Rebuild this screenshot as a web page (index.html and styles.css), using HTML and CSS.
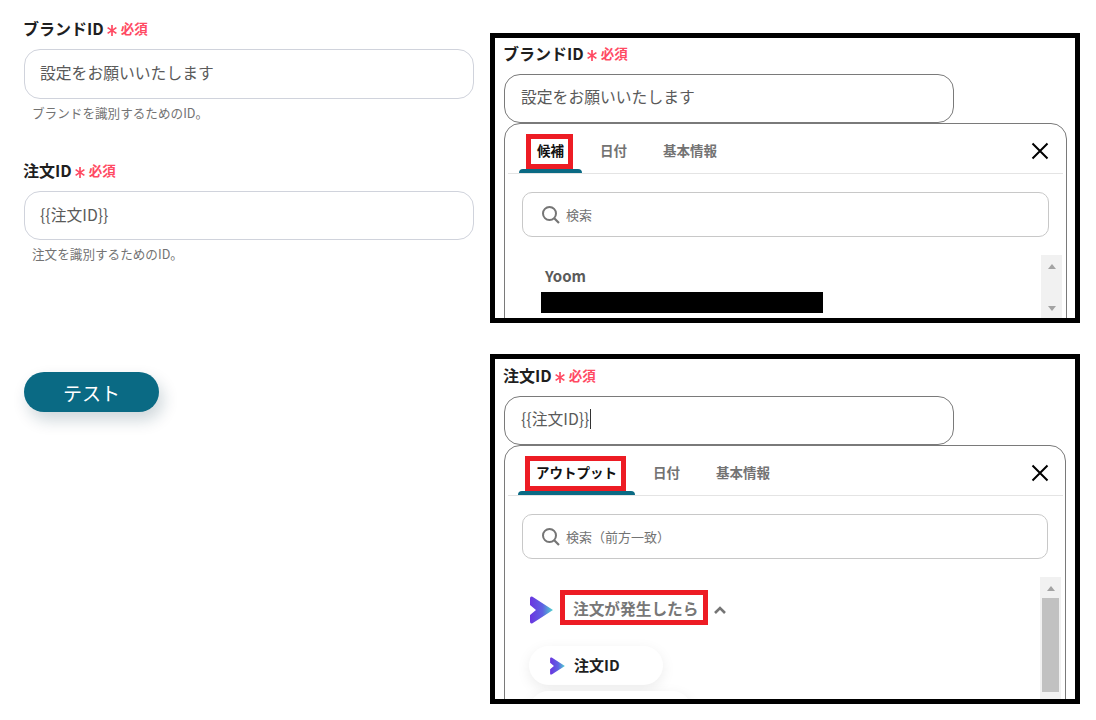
FILE: index.html
```html
<!DOCTYPE html>
<html lang="ja">
<head>
    <meta charset="UTF-8">
    <title>ブランドID / 注文ID</title>
    <link rel="stylesheet" href="styles.css">
</head>
<body>
    <svg class="defs" width="0" height="0" aria-hidden="true">
        <defs>
            <linearGradient id="logoGrad" x1="0" y1="0" x2="1" y2="0">
                <stop offset="0" stop-color="#6a35e0"/>
                <stop offset="0.55" stop-color="#5f62e2"/>
                <stop offset="1" stop-color="#4fd6cf"/>
            </linearGradient>
            <symbol id="star" viewBox="0 0 10 11">
                <path d="M5 0V11M.6 2.6 9.4 8.4M9.4 2.6.6 8.4" stroke="#ff4a63" stroke-width="1.7" fill="none"/>
            </symbol>
        </defs>
    </svg>

    <div class="page">
        <main class="form-col">
            <div class="form-group">
                <div class="label-row">
                    <span class="label-text">ブランドID</span>
                    <svg class="asterisk" width="10" height="11"><use href="#star"/></svg>
                    <span class="required">必須</span>
                </div>
                <div class="text-box">設定をお願いいたします</div>
                <p class="hint">ブランドを識別するためのID。</p>
            </div>

            <div class="form-group">
                <div class="label-row">
                    <span class="label-text">注文ID</span>
                    <svg class="asterisk" width="10" height="11"><use href="#star"/></svg>
                    <span class="required">必須</span>
                </div>
                <div class="text-box text-box-short">{{注文ID}}</div>
                <p class="hint">注文を識別するためのID。</p>
            </div>

            <button type="button" class="test-btn">テスト</button>
        </main>

        <aside class="shots">
            <section class="shot shot-brand">
                <div class="label-row">
                    <span class="label-text">ブランドID</span>
                    <svg class="asterisk" width="10" height="11"><use href="#star"/></svg>
                    <span class="required">必須</span>
                </div>
                <div class="text-box">設定をお願いいたします</div>
                <div class="popup">
                    <div class="tabs">
                        <div class="tab-list">
                            <span class="tab active"><span class="mark"></span>候補</span>
                            <span class="tab">日付</span>
                            <span class="tab">基本情報</span>
                        </div>
                        <svg class="close" width="18" height="18" viewBox="0 0 18 18"><path d="M1.5 1.5 16.5 16.5M16.5 1.5 1.5 16.5" stroke="#000" stroke-width="2" fill="none"/></svg>
                    </div>
                    <div class="search">
                        <svg width="20" height="20" viewBox="0 0 20 20"><circle cx="8.5" cy="8.5" r="6.5" stroke="#757575" stroke-width="2" fill="none"/><path d="M13.2 13.2 18 18" stroke="#757575" stroke-width="2.2" fill="none"/></svg>
                        <span>検索</span>
                    </div>
                    <div class="list">
                        <div class="list-body">
                            <p class="list-title">Yoom</p>
                            <div class="redacted"></div>
                        </div>
                        <div class="scrollbar">
                            <span class="arrow-up"></span>
                            <span class="arrow-down"></span>
                        </div>
                    </div>
                </div>
            </section>

            <section class="shot shot-order">
                <div class="label-row">
                    <span class="label-text">注文ID</span>
                    <svg class="asterisk" width="10" height="11"><use href="#star"/></svg>
                    <span class="required">必須</span>
                </div>
                <div class="text-box">{{注文ID}}<span class="caret"></span></div>
                <div class="popup">
                    <div class="tabs">
                        <div class="tab-list">
                            <span class="tab active"><span class="mark"></span>アウトプット</span>
                            <span class="tab">日付</span>
                            <span class="tab">基本情報</span>
                        </div>
                        <svg class="close" width="18" height="18" viewBox="0 0 18 18"><path d="M1.5 1.5 16.5 16.5M16.5 1.5 1.5 16.5" stroke="#000" stroke-width="2" fill="none"/></svg>
                    </div>
                    <div class="search">
                        <svg width="20" height="20" viewBox="0 0 20 20"><circle cx="8.5" cy="8.5" r="6.5" stroke="#757575" stroke-width="2" fill="none"/><path d="M13.2 13.2 18 18" stroke="#757575" stroke-width="2.2" fill="none"/></svg>
                        <span>検索（前方一致）</span>
                    </div>
                    <div class="list">
                        <div class="list-body">
                            <div class="group-row">
                                <svg class="group-logo" width="25" height="28" viewBox="0 0 25 28"><path d="M1 2.5Q1 0 3.5 .8L24 14 3.5 27.2Q1 28 1 25.5V19L7 14 1 9Z" fill="url(#logoGrad)"/></svg>
                                <span class="group-title">注文が発生したら</span>
                                <svg class="chevron" width="14" height="10" viewBox="0 0 14 10"><path d="M2 8 7 3 12 8" stroke="#757575" stroke-width="2.6" fill="none"/></svg>
                            </div>
                            <div class="pill">
                                <svg width="17" height="18" viewBox="0 0 25 28"><path d="M1 2.5Q1 0 3.5 .8L24 14 3.5 27.2Q1 28 1 25.5V19L7 14 1 9Z" fill="url(#logoGrad)"/></svg>
                                <span class="pill-text">注文ID</span>
                            </div>
                            <div class="pill pill-next"></div>
                        </div>
                        <div class="scrollbar">
                            <span class="arrow-up"></span>
                            <span class="thumb"></span>
                        </div>
                    </div>
                </div>
            </section>
        </aside>
    </div>
</body>
</html>
```

FILE: styles.css
```css
:root {
    --teal: #0a6a84;
    --text-dark: #1f1f1f;
    --text-gray: #5a5a5a;
    --text-muted: #737373;
    --required-red: #ff4a63;
    --mark-red: #ed1c24;
}

* {
    margin: 0;
    padding: 0;
    box-sizing: border-box;
    font-family: "Noto Sans CJK JP", "Noto Sans", sans-serif;
}

body {
    background-color: white;
    overflow: hidden;
}

.defs {
    position: absolute;
}

.page {
    display: grid;
    grid-template-columns: 490px 590px;
    height: 720px;
}

.form-col {
    padding: 17px 16px 0 24px;
}

.form-group {
    height: 142px;
}

.label-row {
    display: flex;
    align-items: center;
    height: 24px;
    margin-bottom: 8px;
    margin-left: -1px;
    padding-bottom: 2px;
}

.label-text {
    font-size: 16px;
    font-weight: 700;
    color: var(--text-dark);
    line-height: 22px;
}

.asterisk {
    flex: none;
    margin: 5px 0 0 3px;
}

.required {
    margin-left: 4px;
    font-size: 13.5px;
    font-weight: 700;
    color: var(--required-red);
    line-height: 22px;
}

.text-box {
    width: 450px;
    height: 50px;
    padding-left: 15px;
    border: 1px solid #d0d3dc;
    border-radius: 16px;
    background: white;
    font-size: 15.8px;
    line-height: 45px;
    color: var(--text-gray);
}

.text-box-short {
    height: 49px;
}

.hint {
    margin: 5px 0 0 8px;
    font-size: 12.6px;
    line-height: 18px;
    color: var(--text-muted);
}

.test-btn {
    display: block;
    width: 135px;
    height: 40px;
    margin-top: 71px;
    border: none;
    border-radius: 20px;
    background-color: var(--teal);
    color: white;
    font-size: 19px;
    box-shadow: 4px 8px 16px rgba(10, 50, 70, 0.2);
}

.shots {
    display: flex;
    flex-direction: column;
    gap: 31px;
    padding-top: 33px;
}

.shot {
    width: 590px;
    padding: 4px 0 0 9px;
    border: 5px solid black;
    overflow: hidden;
}

.shot-brand {
    height: 290px;
}

.shot-order {
    height: 350px;
    padding-top: 5px;
}

.shot .text-box {
    height: 49px;
    padding-left: 16px;
    border-color: #7a7a7a;
    line-height: 43px;
}

.caret {
    display: inline-block;
    width: 1px;
    height: 20px;
    margin-left: 1px;
    background-color: #333;
    vertical-align: -4px;
}

.popup {
    width: 563px;
    height: 260px;
    border: 1px solid #7a7a7a;
    border-radius: 16px 16px 0 0;
    background: white;
}

.shot-order .popup {
    width: 562px;
}

.tabs {
    display: flex;
    justify-content: space-between;
    align-items: center;
    height: 50px;
    margin: 0 3px;
    padding: 0 14px 0 11px;
    border-bottom: 1px solid #e4e4e4;
}

.shot-order .tabs {
    margin-right: 2px;
    padding-left: 10px;
}

.close {
    margin-top: 4px;
}

.tab-list {
    display: flex;
    height: 49px;
}

.tab {
    position: relative;
    padding: 0 18px;
    font-size: 13.5px;
    font-weight: 700;
    line-height: 52px;
    color: var(--text-muted);
}

.tab.active {
    color: #111;
}

.tab.active::after {
    content: "";
    position: absolute;
    left: 0;
    right: 0;
    bottom: 0;
    height: 4px;
    border-radius: 5px 5px 0 0;
    background-color: var(--teal);
}

.mark {
    position: absolute;
    top: 10px;
    left: 7px;
    right: 9px;
    height: 35px;
    border: 5px solid var(--mark-red);
}

.search {
    display: flex;
    align-items: center;
    gap: 5px;
    height: 45px;
    margin: 18px 17px;
    padding-left: 18px;
    border: 1px solid #c8c8c8;
    border-radius: 10px;
    font-size: 13px;
    color: var(--text-muted);
}

.list {
    display: flex;
    justify-content: space-between;
    height: 130px;
    padding-right: 4px;
}

.list-body {
    padding-left: 24px;
}

.list-title {
    padding: 8px 0 0 16px;
    font-size: 15px;
    font-weight: 700;
    line-height: 26px;
    color: var(--text-gray);
}

.redacted {
    width: 282px;
    height: 21px;
    margin: 3px 0 0 12px;
    background-color: black;
}

.scrollbar {
    display: flex;
    flex-direction: column;
    align-items: center;
    width: 21px;
    padding: 9px 2px 0;
    background-color: #f1f1f1;
}

.shot-brand .scrollbar {
    justify-content: space-between;
    height: 63px;
    padding-bottom: 7px;
}

.arrow-up {
    flex: none;
    border: 4px solid transparent;
    border-top: 0;
    border-bottom: 5px solid #a3a3a3;
}

.arrow-down {
    flex: none;
    border: 4px solid transparent;
    border-bottom: 0;
    border-top: 5px solid #a3a3a3;
}

.thumb {
    flex: none;
    width: 17px;
    height: 94px;
    margin-top: 7px;
    background-color: #c1c1c1;
}

.group-row {
    display: flex;
    align-items: center;
    height: 35px;
    margin-top: 13px;
}

.group-logo {
    margin-top: 4px;
}

.group-title {
    position: relative;
    margin-left: 19px;
    padding-top: 2px;
    font-size: 15.7px;
    font-weight: 700;
    line-height: 23px;
    color: #777;
}

.group-title::before {
    content: "";
    position: absolute;
    top: -5px;
    bottom: -5px;
    left: -13px;
    right: -9px;
    border: 5px solid var(--mark-red);
}

.chevron {
    margin: 4px 0 0 14px;
}

.pill {
    display: flex;
    align-items: center;
    gap: 8px;
    width: 134px;
    height: 39px;
    margin-top: 21px;
    padding-left: 20px;
    border-radius: 20px;
    background: white;
    box-shadow: 0 4px 14px rgba(0, 0, 0, 0.08);
    font-size: 15px;
    font-weight: 700;
    color: var(--text-dark);
}

.pill-text {
    padding-bottom: 2px;
}

.pill-next {
    width: 163px;
    margin-top: 6px;
}
```
